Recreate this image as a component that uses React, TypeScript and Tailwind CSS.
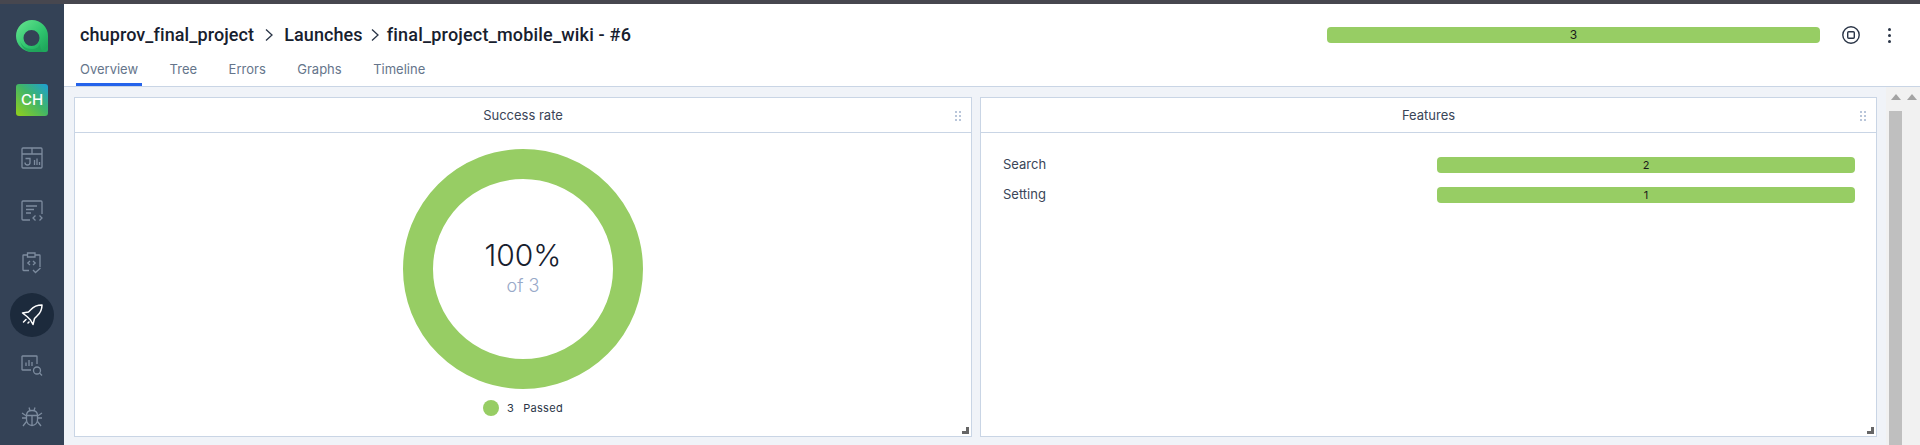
const GREEN = 'bg-[#97cd64]'

function Logo() {
  return (
    <svg width="32" height="32" viewBox="0 0 32 32" fill="none">
      <defs>
        <linearGradient id="logo-a" x1="0.1" y1="0.1" x2="0.9" y2="0.9">
          <stop offset="0" stopColor="#5fe08a" />
          <stop offset="0.6" stopColor="#2fc46e" />
          <stop offset="1" stopColor="#1fa85c" />
        </linearGradient>
      </defs>
      <path
        d="M16 0a16 16 0 0 0 0 32h13.500a2.500 2.500 0 0 0 2.500-2.500V16A16 16 0 0 0 16 0Zm-.5 10a8 8 0 1 1 0 16 8 8 0 0 1 0-16Z"
        fill="url(#logo-a)"
        fillRule="evenodd"
      />
      <path d="M4 21c2 5 6 8 12 8 4 0 7-2 8-5 0 3 1 6 3 8H16C10 32 6 28 4 21Z" fill="#1f9f58" opacity="0.7" />
    </svg>
  )
}

function DashboardsIcon() {
  return (
    <svg width="22" height="22" viewBox="0 0 22 22" fill="none" stroke="#7d8c9f" strokeWidth="1.300">
      <rect x="1" y="1" width="20" height="20" rx="1" />
      <path d="M1 7h20M11 1v6" />
      <path d="M4.500 11.500h4.500v4a2.500 2.500 0 0 1-5 0" />
      <path d="M13.500 13v5M16 11.500V18M18.500 15v3" />
    </svg>
  )
}

function TestCasesIcon() {
  return (
    <svg width="22" height="22" viewBox="0 0 22 22" fill="none" stroke="#7d8c9f" strokeWidth="1.300">
      <path d="M9 20H2a1 1 0 0 1-1-1V2a1 1 0 0 1 1-1h18a1 1 0 0 1 1 1v12" />
      <path d="M5 6h11M5 9.500h8M5 13h5" />
      <path d="M14.500 15.500 12 18l2.500 2.500M18.500 15.500 21 18l-2.500 2.500" />
    </svg>
  )
}

function PlansIcon() {
  return (
    <svg width="20" height="22" viewBox="0 0 20 22" fill="none" stroke="#7d8c9f" strokeWidth="1.300">
      <path d="M5 3H1.500a.5.500 0 0 0-.5.500V18a.5.500 0 0 0 .5.500H7" />
      <path d="M13 3h4.500a.5.500 0 0 1 .5.500V15" />
      <path d="M5.500 1h7.500v4H5.500z" />
      <path d="M8 9 5.800 11 8 13M11 9l2.200 2L11 13" />
      <path d="m11 18 2.500 2.500L18.500 16" />
    </svg>
  )
}

function RocketIcon() {
  return (
    <svg width="22" height="22" viewBox="0 0 22 22" fill="none" stroke="#ffffff" strokeWidth="1.500" strokeLinejoin="round" strokeLinecap="round">
      <path d="M21 1c-4 0-8 1-11 4.500L7.500 8 1.500 9l4.500 3.500 3.500 3.500 2.500 4.500 1.500-6 2.500-2.500C19.500 9 21 5 21 1Z" />
      <path d="M5 15.500 2.500 18M8 18l-1 1" />
    </svg>
  )
}

function ReportsIcon() {
  return (
    <svg width="22" height="22" viewBox="0 0 22 22" fill="none" stroke="#7d8c9f" strokeWidth="1.300">
      <path d="M10 15H1.500a.5.500 0 0 1-.5-.500V1.500a.5.500 0 0 1 .5-.500h14a.5.500 0 0 1 .5.500V9" />
      <path d="M5 7.500V11M8 5v6M11 7v4" />
      <circle cx="16" cy="15.500" r="3.500" />
      <path d="m18.500 18 2.500 2.500" />
    </svg>
  )
}

function BugIcon() {
  return (
    <svg width="22" height="22" viewBox="0 0 22 22" fill="none" stroke="#7d8c9f" strokeWidth="1.300">
      <path d="M5.500 9.500C5.500 6 8 4.500 11 4.500s5.500 1.500 5.500 5V14a5.500 5.500 0 0 1-11 0Z" />
      <path d="M5.500 9.500h11M11 9.500v10M8 1.500l1 3M14 1.500l-1 3" />
      <path d="M1 7l4.500 3M21 7l-4.500 3M1 12h4.500M21 12h-4.500M2 20l3.500-4.500M20 20l-3.500-4.500" />
    </svg>
  )
}

function StopIcon() {
  return (
    <svg width="18" height="18" viewBox="0 0 18 18" fill="none" stroke="#2a3547" strokeWidth="1.400">
      <circle cx="9" cy="9" r="8.200" />
      <rect x="5.700" y="5.700" width="6.600" height="6.600" rx="1" />
    </svg>
  )
}

function GripIcon() {
  return (
    <svg width="6" height="10" viewBox="0 0 6 10" fill="#b9c6da">
      <rect x="0" y="0" width="2" height="2" />
      <rect x="4" y="0" width="2" height="2" />
      <rect x="0" y="4" width="2" height="2" />
      <rect x="4" y="4" width="2" height="2" />
      <rect x="0" y="8" width="2" height="2" />
      <rect x="4" y="8" width="2" height="2" />
    </svg>
  )
}

function Chevron({ className }: { className: string }) {
  return (
    <svg width="10" height="14" viewBox="0 0 10 14" fill="none" stroke="#2a3547" strokeWidth="1.300" className={className}>
      <path d="m2 1.500 6 5.500-6 5.500" />
    </svg>
  )
}

function Bar({ value, className }: { value: number; className: string }) {
  return (
    <div className={`flex h-4 items-center justify-center rounded-[4px] text-[#1a1a1a] ${GREEN} ${className}`}>
      {value}
    </div>
  )
}

function Panel({ title, className, children }: { title: string; className: string; children: React.ReactNode }) {
  return (
    <section className={`relative flex flex-col border border-[#c9d5e5] bg-white ${className}`}>
      <header className="relative flex h-[35px] shrink-0 items-center justify-center border-b border-[#c9d5e5] pt-[1px] text-[13px] text-[#3a4557]">
        {title}
        <span className="absolute top-[13px] right-[10px] flex">
          <GripIcon />
        </span>
      </header>
      {children}
      <span className="absolute right-[2px] bottom-[2px] h-[7px] w-[7px] border-r-[3px] border-b-[3px] border-[#666666]" />
    </section>
  )
}

function ScrollArrow() {
  return <span className="h-0 w-0 border-x-[5px] border-b-[6px] border-x-transparent border-b-[#a3a3a3]" />
}

const NAV_ICONS = [
  { icon: <DashboardsIcon />, mb: 'mb-[31px]' },
  { icon: <TestCasesIcon />, mb: 'mb-[30px]' },
  { icon: <PlansIcon />, mb: 'mb-[19px]' },
]

const TABS = ['Overview', 'Tree', 'Errors', 'Graphs', 'Timeline']

export default function App() {
  return (
    <div className="flex h-[445px] w-[1920px] flex-col overflow-hidden bg-[#f0f3f8] font-['Inter',sans-serif]">
      <div className="h-1 shrink-0 bg-[#47474f]" />
      <div className="flex min-h-0 flex-1">
        {/* sidebar */}
        <aside className="flex w-16 shrink-0 flex-col items-center bg-[#344256] pt-4">
          <Logo />
          <div className="mt-8 mb-[31px] flex h-8 w-8 items-center justify-center rounded-[3px] bg-[linear-gradient(45deg,#93d01a,#3fb56a_55%,#1d9fd8)] text-[15px] font-medium text-white">
            CH
          </div>
          {NAV_ICONS.map((item, i) => (
            <div key={i} className={`flex h-[22px] items-center justify-center ${item.mb}`}>
              {item.icon}
            </div>
          ))}
          <div className="mb-[18px] flex h-11 w-11 items-center justify-center rounded-full bg-[#1c2a3c]">
            <RocketIcon />
          </div>
          <div className="mb-[29px]">
            <ReportsIcon />
          </div>
          <BugIcon />
        </aside>

        <div className="flex min-w-0 flex-1 flex-col">
          {/* header */}
          <div className="h-[83px] shrink-0 border-b border-[#c9d5e5] bg-white">
            <div className="flex h-[51px] items-start pt-[20px] pl-4 pr-[29px]">
              <div className="flex h-[22px] items-center font-['Roboto',sans-serif] text-[18px] leading-[22px] font-medium tracking-[0.1px] text-[#17202e]">
                <span>chuprov_final_project</span>
                <Chevron className="mx-[10px]" />
                <span>Launches</span>
                <Chevron className="mx-[7px]" />
                <span className="tracking-[0.2px]">final_project_mobile_wiki - #6</span>
              </div>
              <div className="ml-auto flex items-center">
                <Bar value={3} className="mt-[2px] w-[493px] text-[12px]" />
                <span className="ml-[22px] mt-[2px] flex">
                  <StopIcon />
                </span>
                <span className="ml-[28px] mt-[2px] flex flex-col gap-[3px]">
                  <i className="h-[3px] w-[3px] rounded-full bg-[#2a3547]" />
                  <i className="h-[3px] w-[3px] rounded-full bg-[#2a3547]" />
                  <i className="h-[3px] w-[3px] rounded-full bg-[#2a3547]" />
                </span>
              </div>
            </div>
            <nav className="flex h-[31px] pl-3">
              {TABS.map((tab, i) => (
                <div
                  key={tab}
                  className={`flex h-[31px] items-start border-b-[3px] px-1 pt-1 text-[13px] leading-[20px] text-[#65758b] ${
                    i === 0 ? 'border-[#2563eb]' : 'border-transparent'
                  } ${i === TABS.length - 1 ? '' : 'mr-[23.500px]'}`}
                >
                  {tab}
                </div>
              ))}
            </nav>
          </div>

          {/* content */}
          <div className="flex min-h-0 flex-1">
            <div className="flex min-w-0 flex-1 gap-2 pt-[10px] pb-2 pl-[10px] pr-[9px]">
              <Panel title="Success rate" className="w-[898px]">
                <div className="flex flex-1 flex-col items-center pt-4">
                  <div className="relative h-60 w-60 rounded-full border-[30px] border-[#97cd64]">
                    <div className="absolute inset-0 flex flex-col items-center pt-[58px]">
                      <span className="text-[30px] leading-[36px] font-light text-[#17202e]">100%</span>
                      <span className="text-[18px] leading-[26px] font-light text-[#98a9c8]">of 3</span>
                    </div>
                  </div>
                  <div className="mt-[11px] flex items-center text-[11px] tracking-[0.3px] text-[#2a3547]">
                    <i className={`mr-2 h-4 w-4 rounded-full ${GREEN}`} />
                    <span className="mr-[9px]">3</span>
                    <span>Passed</span>
                  </div>
                </div>
              </Panel>
              <Panel title="Features" className="flex-1">
                <div className="flex flex-col gap-[14px] pt-6 pr-[21px] pl-[22px] text-[11px] leading-4">
                  <div className="flex h-4 items-center justify-between text-[#3a4557]">
                    <span className="text-[13px] -translate-y-[1px]">Search</span>
                    <Bar value={2} className="w-[418px]" />
                  </div>
                  <div className="flex h-4 items-center justify-between text-[#3a4557]">
                    <span className="text-[13px] -translate-y-[1px]">Setting</span>
                    <Bar value={1} className="w-[418px]" />
                  </div>
                </div>
              </Panel>
            </div>
            {/* scrollbars */}
            <div className="flex w-[34px] shrink-0 bg-[#f1f1f1]">
              <div className="flex w-[17px] flex-col items-center pt-[7px] pl-[2px]">
                <ScrollArrow />
                <div className="mt-[11px] w-[13px] flex-1 bg-[#bfbfbf]" />
              </div>
              <div className="flex w-[17px] flex-col items-center pt-[7px]">
                <ScrollArrow />
              </div>
            </div>
          </div>
        </div>
      </div>
    </div>
  )
}
